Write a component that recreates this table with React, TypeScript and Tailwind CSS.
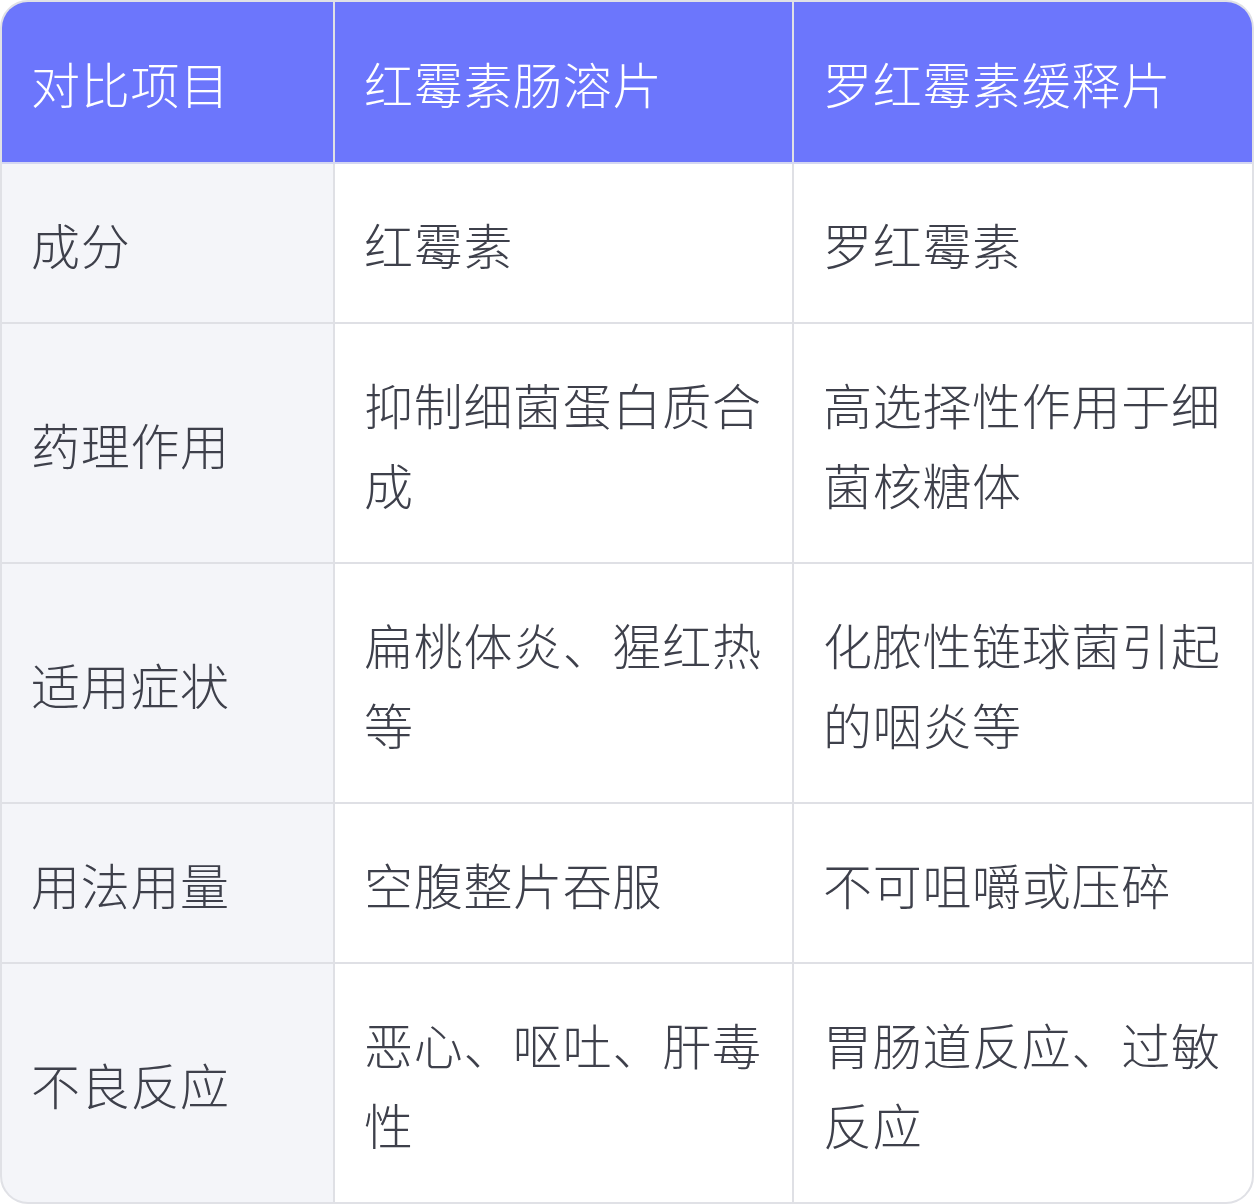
import React from "react";

const rows: { label: string; a: string; b: string }[] = [
  { label: "成分", a: "红霉素", b: "罗红霉素" },
  { label: "药理作用", a: "抑制细菌蛋白质合成", b: "高选择性作用于细菌核糖体" },
  { label: "适用症状", a: "扁桃体炎、猩红热等", b: "化脓性链球菌引起的咽炎等" },
  { label: "用法用量", a: "空腹整片吞服", b: "不可咀嚼或压碎" },
  { label: "不良反应", a: "恶心、呕吐、肝毒性", b: "胃肠道反应、过敏反应" },
];

export default function App() {
  return (
    <div
      className="w-[1254px] h-[1204px] bg-white"
      style={{ fontFamily: '"Noto Sans CJK SC", "Noto Sans", sans-serif' }}
    >
      <div className="w-[1254px] h-[1204px] rounded-[28px] border-2 border-[#e0e1e6] overflow-hidden bg-[#dfe0e5]">
        <div className="grid grid-cols-[331px_457px_458px] gap-x-[2px] bg-[#dfe0e5] border-b-2 border-[#d4d7f2]">
          {["对比项目", "红霉素肠溶片", "罗红霉素缓释片"].map((h) => (
            <div
              key={h}
              className="bg-[#6c76fc] text-white text-[49px] tracking-[0.7px] leading-[80px] font-light pt-[41px] pb-[39px] pl-[29px] pr-[20px] h-[160px] whitespace-nowrap"
            >
              {h}
            </div>
          ))}
        </div>
        {rows.map((r, i) => (
          <div
            key={r.label}
            className={
              "grid grid-cols-[331px_457px_458px] gap-x-[2px] bg-[#dfe0e5] " +
              (i < rows.length - 1 ? "border-b-2 border-[#dfe0e5]" : "")
            }
          >
            <div className="bg-[#f4f5f9] text-[#3e404b] text-[49px] tracking-[0.7px] leading-[80px] font-light pt-[40px] pb-[38px] pl-[29px] pr-[20px] flex items-center">
              {r.label}
            </div>
            <div className="bg-white text-[#3e404b] text-[49px] tracking-[0.7px] leading-[80px] font-light pt-[40px] pb-[38px] pl-[29px] pr-[20px]">
              {r.a}
            </div>
            <div className="bg-white text-[#3e404b] text-[49px] tracking-[0.7px] leading-[80px] font-light pt-[40px] pb-[38px] pl-[29px] pr-[20px]">
              {r.b}
            </div>
          </div>
        ))}
      </div>
    </div>
  );
}
